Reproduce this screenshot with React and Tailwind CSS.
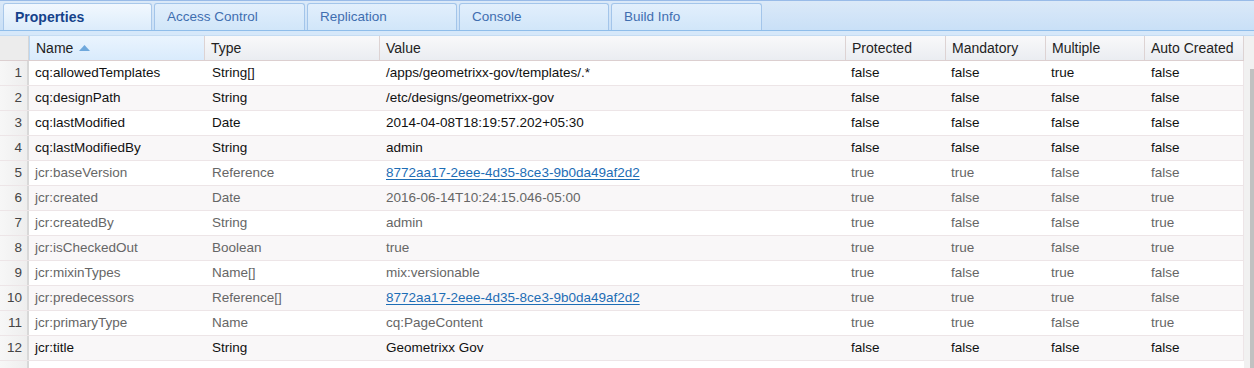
import React from "react";

const rows = [
  ["cq:allowedTemplates", "String[]", "/apps/geometrixx-gov/templates/.*", false, "false", "false", "true", "false"],
  ["cq:designPath", "String", "/etc/designs/geometrixx-gov", false, "false", "false", "false", "false"],
  ["cq:lastModified", "Date", "2014-04-08T18:19:57.202+05:30", false, "false", "false", "false", "false"],
  ["cq:lastModifiedBy", "String", "admin", false, "false", "false", "false", "false"],
  ["jcr:baseVersion", "Reference", "8772aa17-2eee-4d35-8ce3-9b0da49af2d2", true, "true", "true", "false", "false"],
  ["jcr:created", "Date", "2016-06-14T10:24:15.046-05:00", false, "true", "false", "false", "true"],
  ["jcr:createdBy", "String", "admin", false, "true", "false", "false", "true"],
  ["jcr:isCheckedOut", "Boolean", "true", false, "true", "true", "false", "true"],
  ["jcr:mixinTypes", "Name[]", "mix:versionable", false, "true", "false", "true", "false"],
  ["jcr:predecessors", "Reference[]", "8772aa17-2eee-4d35-8ce3-9b0da49af2d2", true, "true", "true", "true", "false"],
  ["jcr:primaryType", "Name", "cq:PageContent", false, "true", "true", "false", "true"],
  ["jcr:title", "String", "Geometrixx Gov", false, "false", "false", "false", "false"],
];

const tabs = [
  { label: "Properties", w: "w-[149px]", active: true },
  { label: "Access Control", w: "w-[151px]" },
  { label: "Replication", w: "w-[150px]" },
  { label: "Console", w: "w-[150px]" },
  { label: "Build Info", w: "w-[151px]" },
];

const cols = [
  { label: "Name", w: "w-[176px]" },
  { label: "Type", w: "w-[175px]" },
  { label: "Value", w: "w-[466px]" },
  { label: "Protected", w: "w-[100px]" },
  { label: "Mandatory", w: "w-[100px]" },
  { label: "Multiple", w: "w-[99px]" },
  { label: "Auto Created", w: "w-[99px]" },
];

export default function App() {
  return (
    <div
      className="w-[1254px] h-[368px] overflow-hidden bg-white text-[13.5px] leading-none"
      style={{ fontFamily: '"Liberation Sans", Arial, sans-serif' }}
    >
      {/* Tab strip */}
      <div className="h-[31px] border-t border-[#99bbe8] bg-gradient-to-b from-[#dbe9f8] to-[#c9e0f7] border-b border-b-[#8fbdea] flex items-end pl-[3px] gap-[2px]">
        {tabs.map((t) => (
          <div
            key={t.label}
            className={`${t.w} h-[27px] rounded-t-[3px] border border-b-0 flex items-center ${
              t.active
                ? "border-[#a9c8ea] bg-gradient-to-b from-[#f2f8fe] to-[#dcecfb] font-bold text-[#15428b] text-[14px] pl-[11px]"
                : "border-[#a3c5ea] bg-gradient-to-b from-[#e2effc] to-[#d1e6f9] text-[#3f6eb0] text-[13.5px] pl-[12px]"
            }`}
          >
            {t.label}
          </div>
        ))}
      </div>
      {/* thin band */}
      <div className="h-[5px] bg-[#d6e8fa] border-b border-[#c5dcf3]" />
      <div className="flex">
        <div className="w-[1244px]">
          {/* Header */}
          <div className="flex h-[25px] border-b border-[#dccfd0] bg-gradient-to-b from-[#f9f9fa] to-[#eaedf1] text-[#222] text-[14px]">
            <div className="w-[29px] border-r border-[#d6d6d6] bg-[#ececec]" />
            {cols.map((c, i) => (
              <div
                key={c.label}
                className={`${c.w} shrink-0 border-r border-[#ddd3d3] flex items-center pl-[6px] ${
                  i === 0 ? "bg-gradient-to-b from-[#eaf4fe] to-[#d9ebfc] border-l border-l-[#bcd8f3]" : ""
                }`}
              >
                {c.label}
                {i === 0 && (
                  <svg width="11" height="6" viewBox="0 0 11 6" className="ml-[6px]">
                    <path d="M0 6 L5.5 0 L11 6 Z" fill="#6fa8dc" />
                  </svg>
                )}
              </div>
            ))}
          </div>
          {/* Rows */}
          {rows.map((r, idx) => {
            const dark = r[4] === "false";
            const color = dark ? "text-[#111]" : "text-[#666]";
            const even = idx % 2 === 1;
            return (
              <div
                key={idx}
                className={`flex h-[25px] border-b border-[#ede5e7] ${even ? "bg-[#f9f7f8]" : "bg-white"} ${color}`}
              >
                <div className="w-[29px] shrink-0 border-r-[2px] border-[#d8d8d8] bg-gradient-to-r from-[#f7f7f7] to-[#eeeeee] flex items-center justify-end pr-[5px] text-[#444]">
                  {idx + 1}
                </div>
                <div className="w-[176px] shrink-0 flex items-center pl-[6px]">{r[0]}</div>
                <div className="w-[175px] shrink-0 flex items-center pl-[7px]">{r[1]}</div>
                <div className="w-[466px] shrink-0 flex items-center pl-[6px]">
                  {r[3] ? (
                    <span className="text-[#1d6db5] underline underline-offset-[2px]">{r[2]}</span>
                  ) : (
                    r[2]
                  )}
                </div>
                <div className="w-[100px] shrink-0 flex items-center pl-[5px]">{r[4]}</div>
                <div className="w-[100px] shrink-0 flex items-center pl-[5px]">{r[5]}</div>
                <div className="w-[99px] shrink-0 flex items-center pl-[5px]">{r[6]}</div>
                <div className="w-[99px] shrink-0 flex items-center pl-[6px] border-r border-[#ede5e7]">{r[7]}</div>
              </div>
            );
          })}
          <div className="flex h-[25px] bg-white">
            <div className="w-[29px] shrink-0 border-r-[2px] border-[#d8d8d8] bg-gradient-to-r from-[#f7f7f7] to-[#eeeeee]" />
          </div>
        </div>
        {/* Scrollbar */}
        <div className="w-[10px] bg-[#f1f1f1] pt-[33px] flex justify-end">
          <div className="w-[4px] h-[300px] bg-[#c1c1c1]" />
        </div>
      </div>
    </div>
  );
}
